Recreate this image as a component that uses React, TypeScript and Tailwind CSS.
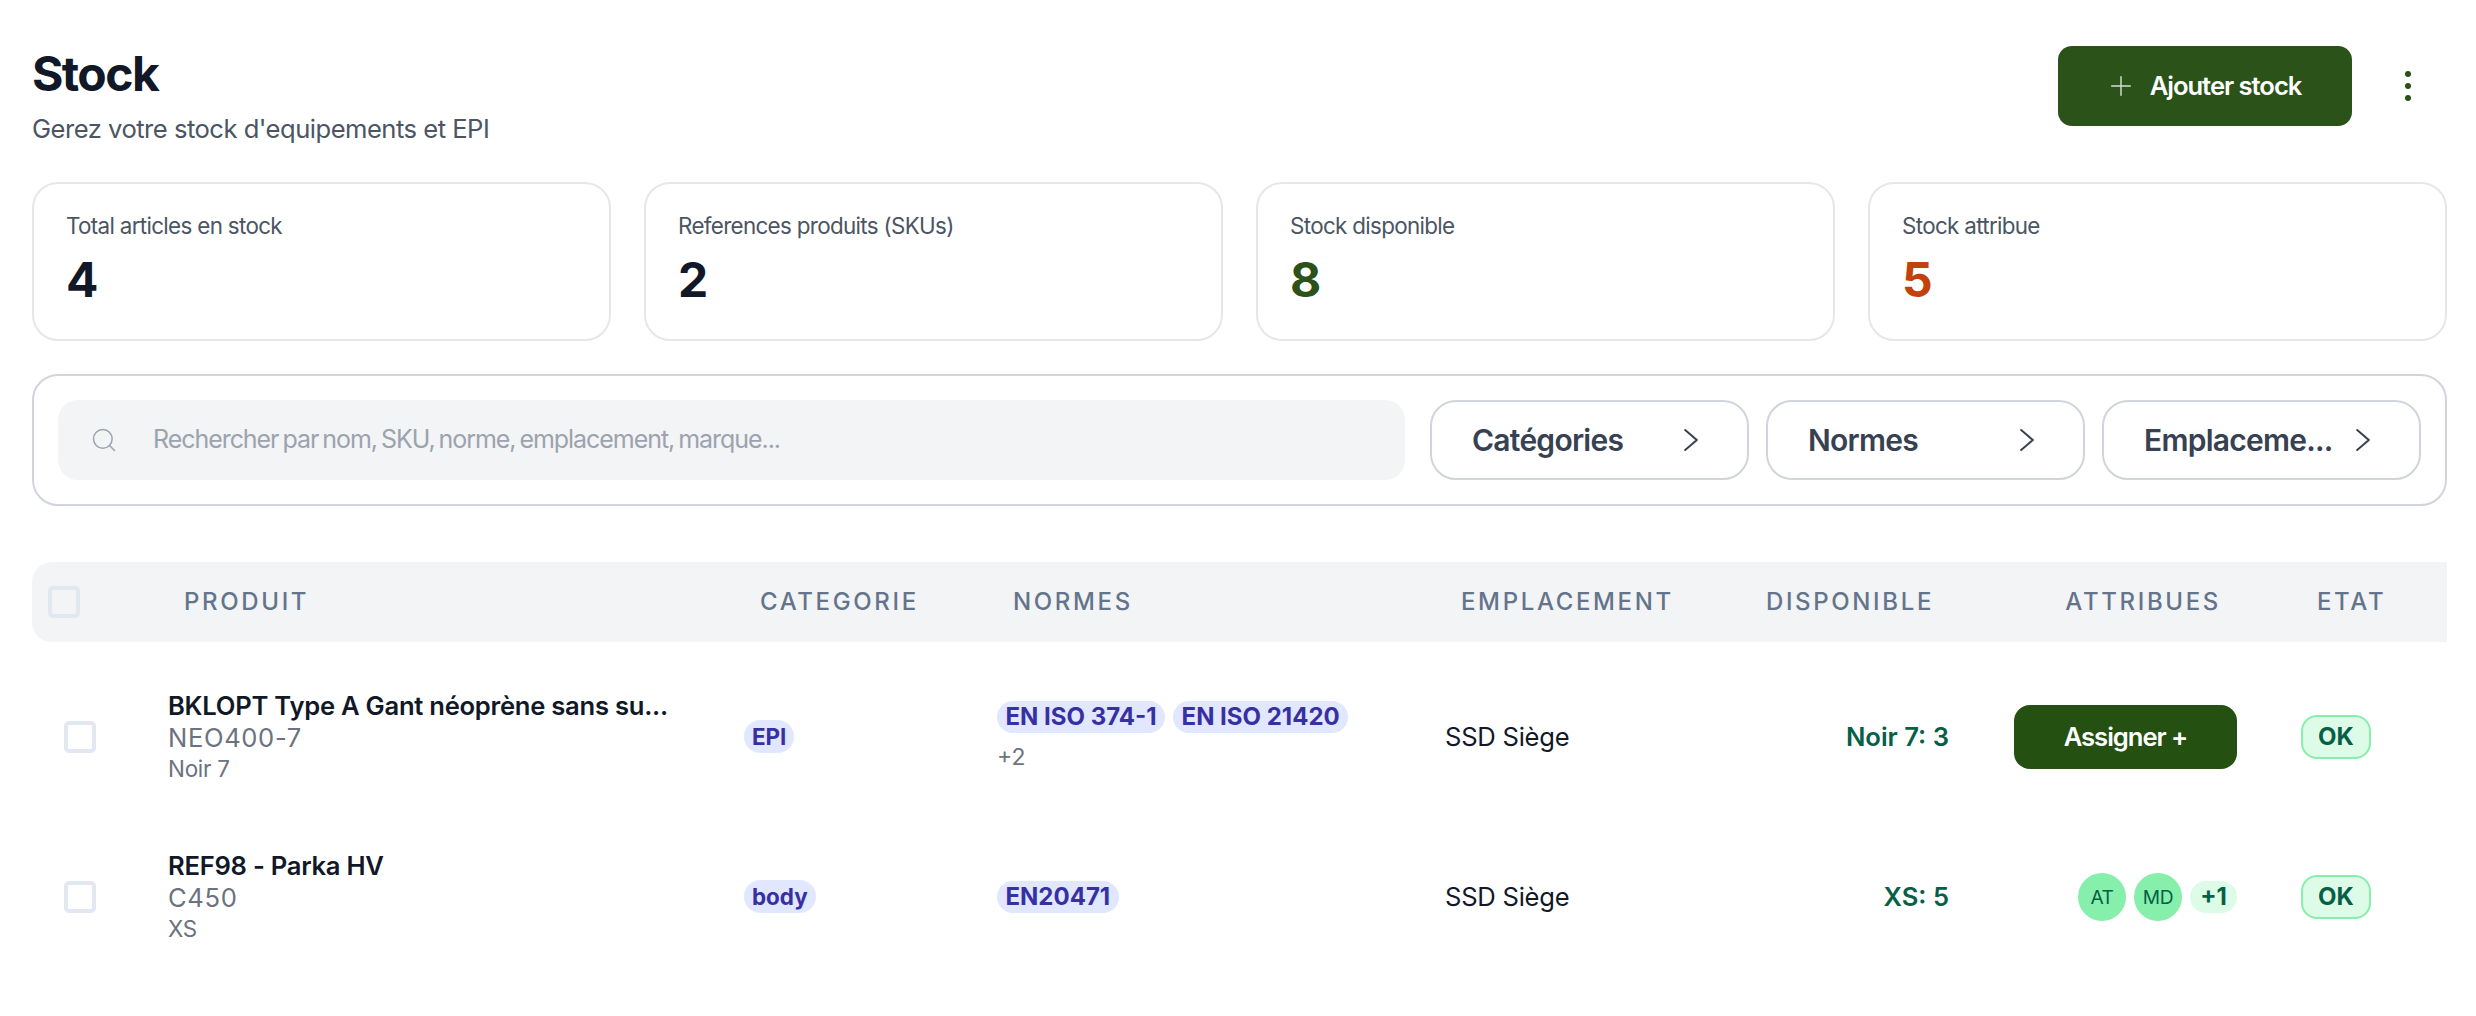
const font = { fontFamily: 'Inter, "Liberation Sans", sans-serif' };

function Chevron() {
  return (
    <svg width="40" height="40" viewBox="0 0 24 24" fill="none" stroke="#374151" strokeWidth="1.2" strokeLinecap="round" strokeLinejoin="round" className="shrink-0">
      <path d="m8.5 18 7-6-7-6" />
    </svg>
  );
}

function StatCard({ label, value, color }: { label: string; value: string; color: string }) {
  return (
    <div className="h-[159px] rounded-[26px] border-2 border-[#e5e7eb] bg-white pl-[32px] pt-[25px]">
      <div className="text-[22.4px] leading-[34px] tracking-[-0.03em] text-[#4b5563]">{label}</div>
      <div className={`mt-[7px] text-[48px] font-bold leading-[60px] ${color}`}>{value}</div>
    </div>
  );
}

function Select({ label }: { label: string }) {
  return (
    <div className="flex h-[80px] w-[319px] items-center justify-between rounded-[26px] border-2 border-[#d1d5db] bg-white pl-[40px] pr-[36px]">
      <span className="truncate text-[30px] font-semibold tracking-[-0.025em] text-[#374151]">{label}</span>
      <Chevron />
    </div>
  );
}

function Badge({ children, large }: { children: string; large?: boolean }) {
  return (
    <span className={`rounded-full bg-[#e0e7ff] py-[3px] font-bold leading-[26px] text-[#3730a3] ${large ? "px-[8.5px] text-[24px]" : "px-[8px] text-[22.4px]"}`}>
      {children}
    </span>
  );
}

function Ok() {
  return <span className="inline-flex h-[44px] w-[70px] items-center justify-center rounded-[16px] border-2 border-[#86efac] bg-[#dcfce7] text-[24px] font-bold text-[#065f46]">OK</span>;
}

function Checkbox({ header }: { header?: boolean }) {
  return <div className={`h-[32px] w-[32px] rounded-[5px] border-4 border-[#e2e8f0] ${header ? "bg-[#f3f4f6]" : "bg-white"}`} />;
}

const cols = "grid grid-cols-[120px_576px_253px_448px_273px_263px_320px_162px]";
const headCell = "text-[24px] font-medium uppercase tracking-[0.11em] text-[#64748b]";

function Row({ name, sku, variant, cat, normes, more, dispo, attrib }: { name: string; sku: string; variant: string; cat: string; normes: string[]; more?: string; dispo: string; attrib: React.ReactNode }) {
  return (
    <div className={`${cols} h-[160px] items-center`}>
      <div className="pl-[32px]"><Checkbox /></div>
      <div className="min-w-0 pl-[16px]">
        <div className="truncate text-[25.6px] font-semibold leading-[32px] tracking-[-0.01em] text-[#111827]">{name}</div>
        <div className="text-[25.6px] leading-[32px] tracking-[0.025em] text-[#6b7280]">{sku}</div>
        <div className="text-[22.4px] leading-[30px] tracking-[-0.01em] text-[#6b7280]">{variant}</div>
      </div>
      <div className="pl-[16px]"><Badge>{cat}</Badge></div>
      <div className="pl-[16px]">
        <div className="flex gap-[8px]">{normes.map((n) => <Badge key={n} large>{n}</Badge>)}</div>
        {more && <div className="mt-[7px] text-[23px] leading-[34px] text-[#6b7280]">{more}</div>}
      </div>
      <div className="pl-[16px] text-[25.6px] tracking-[-0.01em] text-[#111827]">SSD Siège</div>
      <div className="pr-[16px] text-right text-[25.6px] font-semibold text-[#065f46]">{dispo}</div>
      <div className="flex justify-end pr-[48px]">{attrib}</div>
      <div className="pl-[16px]"><Ok /></div>
    </div>
  );
}

export default function App() {
  return (
    <div style={font} className="min-h-screen bg-white pl-[32px] pr-[29px]">
      <div className="flex h-[182px] items-start justify-between">
        <div className="pt-[46px]">
          <h1 className="text-[48px] font-bold leading-[56px] tracking-[-0.033em] text-[#111827]">Stock</h1>
          <p className="mt-[9px] text-[25.6px] leading-[36px] tracking-[-0.02em] text-[#4b5563]">Gerez votre stock d'equipements et EPI</p>
        </div>
        <div className="flex items-center pt-[46px]">
          <button className="flex h-[80px] w-[294px] items-center justify-center gap-[13px] rounded-[14px] bg-[#2b5219] pr-[4px] text-[25.6px] font-semibold tracking-[-0.04em] text-white">
            <svg width="32" height="32" viewBox="0 0 24 24" fill="none" stroke="currentColor" strokeWidth="1.1" strokeLinecap="round" className="opacity-80"><path d="M5 12h14M12 5v14" /></svg>
            Ajouter stock
          </button>
          <div className="ml-[53px] mr-[36px] flex flex-col gap-[6px]">
            <span className="h-[6px] w-[6px] rounded-full bg-[#2b5219]" />
            <span className="h-[6px] w-[6px] rounded-full bg-[#2b5219]" />
            <span className="h-[6px] w-[6px] rounded-full bg-[#2b5219]" />
          </div>
        </div>
      </div>

      <div className="grid grid-cols-4 gap-[33px]">
        <StatCard label="Total articles en stock" value="4" color="text-[#111827]" />
        <StatCard label="References produits (SKUs)" value="2" color="text-[#111827]" />
        <StatCard label="Stock disponible" value="8" color="text-[#2b5219]" />
        <StatCard label="Stock attribue" value="5" color="text-[#c2410c]" />
      </div>

      <div className="mt-[33px] flex h-[132px] items-center gap-[17px] rounded-[26px] border-2 border-[#d1d5db] bg-white pl-[24px] pr-[24px]">
        <div className="mr-[8px] flex h-[80px] flex-1 items-center gap-[35px] rounded-[20px] bg-[#f3f4f5] pl-[32px]">
          <svg width="28" height="28" viewBox="0 0 24 24" fill="none" stroke="#9ca3af" strokeWidth="1.3" strokeLinecap="round"><circle cx="11" cy="11" r="8" /><path d="m21 21-4.3-4.3" /></svg>
          <span className="text-[25px] tracking-[-0.042em] text-[#9ca3af] [word-spacing:-2px]">Rechercher par nom, SKU, norme, emplacement, marque...</span>
        </div>
        <Select label="Catégories" />
        <Select label="Normes" />
        <Select label="Emplaceme..." />
      </div>

      <div className={`${cols} mt-[56px] h-[80px] items-center rounded-l-[20px] bg-[#f3f4f6]`}>
        <div className="pl-[16px]"><Checkbox header /></div>
        <div className={`pl-[32px] ${headCell}`}>Produit</div>
        <div className={`pl-[32px] ${headCell}`}>Categorie</div>
        <div className={`pl-[32px] ${headCell}`}>Normes</div>
        <div className={`pl-[32px] ${headCell}`}>Emplacement</div>
        <div className={`pr-[31px] text-right ${headCell}`}>Disponible</div>
        <div className={`pr-[64px] text-right ${headCell}`}>Attribues</div>
        <div className={`pl-[32px] ${headCell}`}>Etat</div>
      </div>

      <div className="pt-[15px]">
        <Row
          name="BKLOPT Type A Gant néoprène sans su..."
          sku="NEO400-7"
          variant="Noir 7"
          cat="EPI"
          normes={["EN ISO 374-1", "EN ISO 21420"]}
          more="+2"
          dispo="Noir 7: 3"
          attrib={<button className="flex h-[64px] w-[223px] items-center justify-center rounded-[16px] bg-[#245012] text-[25.6px] font-semibold tracking-[-0.04em] text-white">Assigner +</button>}
        />
        <Row
          name="REF98 - Parka HV"
          sku="C450"
          variant="XS"
          cat="body"
          normes={["EN20471"]}
          dispo="XS: 5"
          attrib={
            <div className="flex items-center gap-[8px]">
              <span className="flex h-[48px] w-[48px] items-center justify-center rounded-full bg-[#86efac] text-[19.2px] tracking-[-0.02em] text-[#065f46]">AT</span>
              <span className="flex h-[48px] w-[48px] items-center justify-center rounded-full bg-[#86efac] text-[19.2px] tracking-[-0.02em] text-[#065f46]">MD</span>
              <span className="flex h-[32px] w-[47px] items-center justify-center rounded-full bg-[#dcfce7] text-[24px] font-bold text-[#065f46]">+1</span>
            </div>
          }
        />
      </div>
    </div>
  );
}
